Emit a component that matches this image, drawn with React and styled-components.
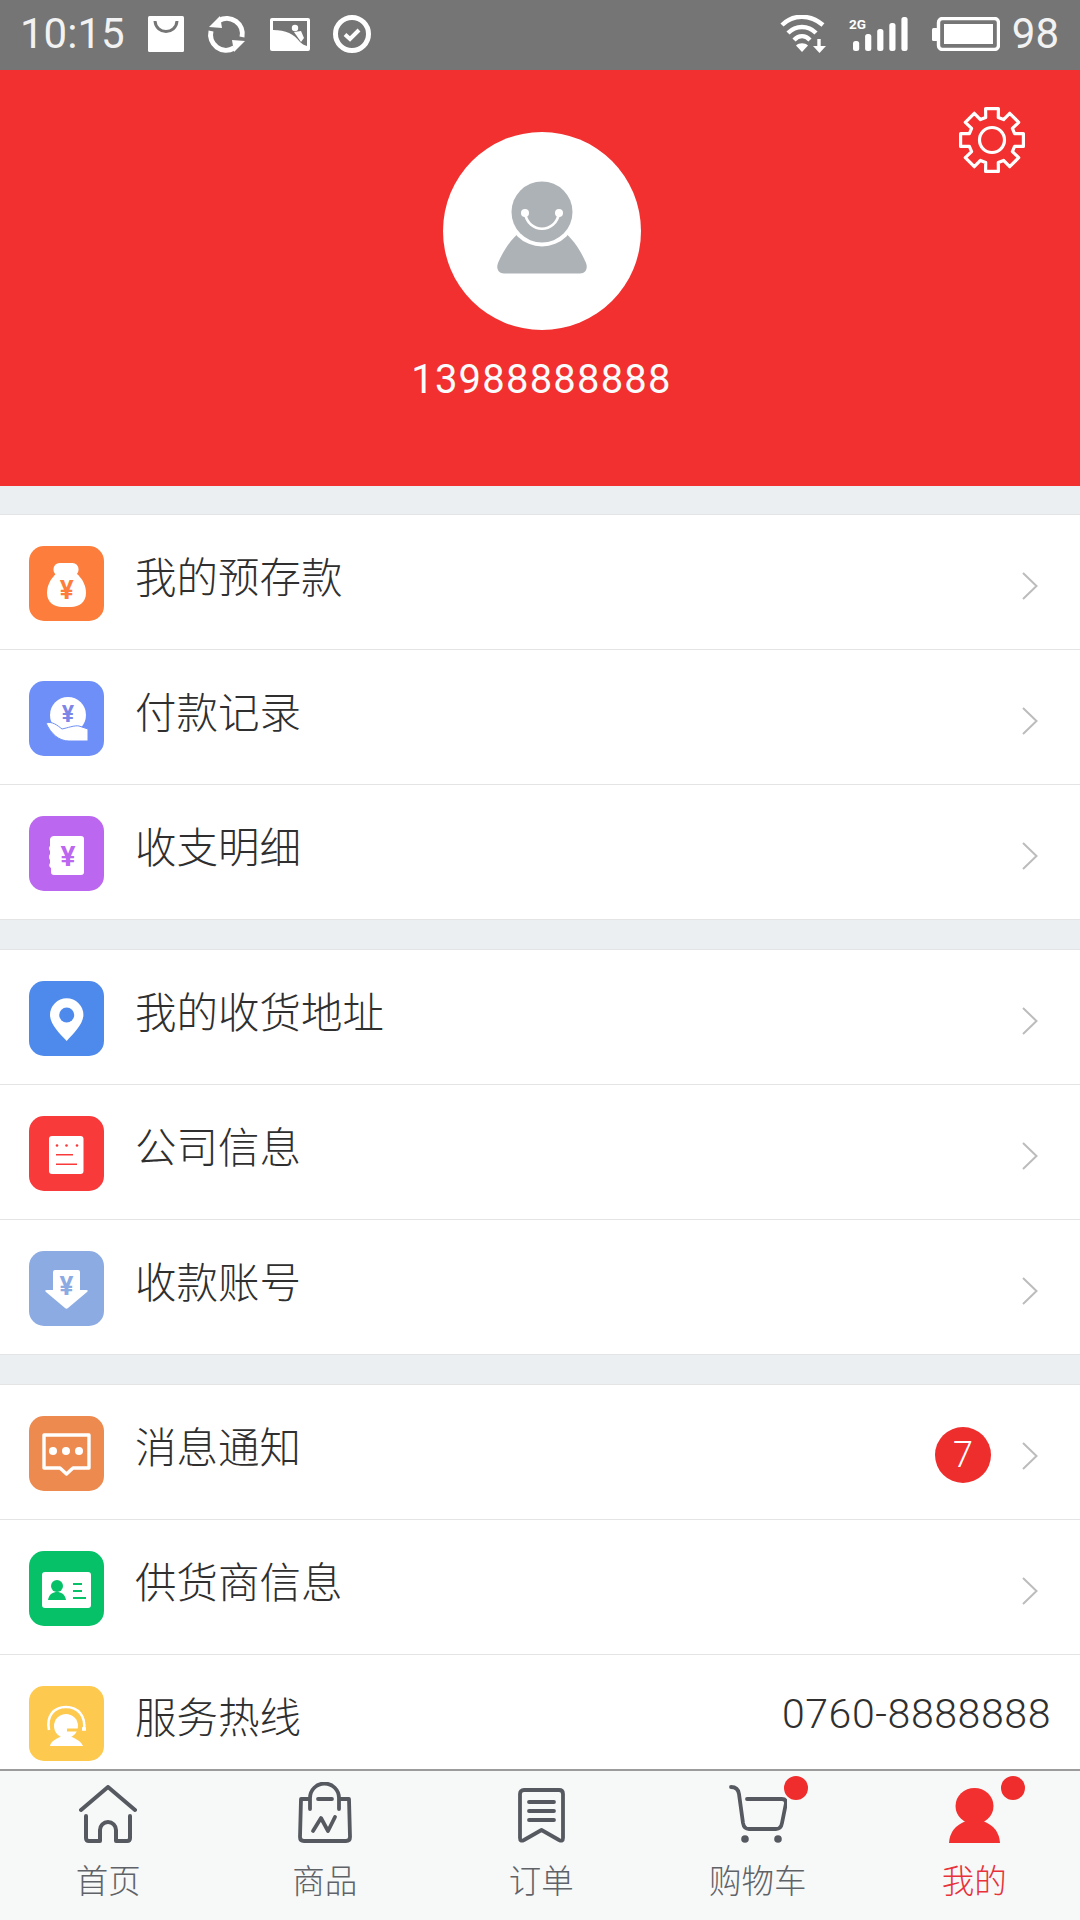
import React from "react";
import styled, { createGlobalStyle } from "styled-components";

const Global = createGlobalStyle`
  html, body { margin: 0; padding: 0; background: #ebeff1; }
  * { box-sizing: border-box; }
  #root { width: 1080px; height: 1920px; overflow: hidden; }
`;

const CJK = `Roboto, "Noto Sans CJK SC", sans-serif`;

const Page = styled.div`
  width: 1080px;
  height: 1920px;
  display: flex;
  flex-direction: column;
  overflow: hidden;
  font-family: ${CJK};
  background: #ebeff1;
`;

const StatusBar = styled.div`
  flex: none;
  height: 70px;
  background: #757575;
  display: flex;
  align-items: center;
  justify-content: space-between;
  padding: 0 21px 2px 20px;
  color: #fff;
`;
const StatusGroup = styled.div`
  display: flex;
  align-items: center;
  gap: ${(p) => p.$gap}px;
`;
const StatusText = styled.span`
  font-size: 42px;
  line-height: 50px;
  font-weight: 400;
  margin-right: ${(p) => p.$after || 0}px;
  margin-left: ${(p) => p.$before || 0}px;
  color: #f2f2f2;
`;

const Header = styled.header`
  flex: none;
  position: relative;
  height: 416px;
  background: #f1302f;
  display: flex;
  flex-direction: column;
  align-items: center;
  padding: 62px 0 0 3px;
`;
const GearButton = styled.div`
  position: absolute;
  top: 35px;
  right: 53px;
  line-height: 0;
`;
const Avatar = styled.div`
  width: 198px;
  height: 198px;
  border-radius: 50%;
  background: #fff;
  display: flex;
  align-items: center;
  justify-content: center;
  padding-bottom: 9px;
`;
const Phone = styled.div`
  margin-top: 25px;
  font-size: 40px;
  line-height: 50px;
  letter-spacing: 1.2px;
  font-weight: 400;
  color: #fbfbfb;
`;

const List = styled.main`
  flex: 1;
  min-height: 0;
  overflow: hidden;
  padding-top: 29px;
  display: flex;
  flex-direction: column;
  gap: 30px;
`;
const Section = styled.section`
  flex: none;
  background: #fff;
  box-shadow: 0 -1px 0 #e2e4e5;
`;
const Row = styled.div`
  height: 135px;
  display: flex;
  align-items: center;
  padding: 0 42px 0 29px;
  border-bottom: 1px solid #e2e4e5;
`;
const Tile = styled.div`
  flex: none;
  width: 75px;
  height: 75px;
  border-radius: 15px;
  background: ${(p) => p.$bg};
  line-height: 0;
  margin-top: 3px;
`;
const Label = styled.div`
  flex: 1;
  margin: 0 0 6px 31px;
  font-size: 41.500px;
  line-height: 56px;
  color: #2f2f2f;
  font-weight: 300;
`;
const Badge = styled.div`
  width: 56px;
  height: 56px;
  border-radius: 50%;
  background: #ee2d2d;
  color: #fff;
  font-size: 36px;
  font-weight: 300;
  line-height: 56px;
  text-align: center;
  margin: 6px 31px 0 0;
`;
const Chevron = styled.svg`
  flex: none;
  width: 16px;
  height: 28px;
  margin-top: 7px;
`;
const Hotline = styled.div`
  font-size: 41px;
  line-height: 50px;
  letter-spacing: 0.6px;
  color: #2f2f2f;
  margin: 0 -13px 16px 0;
  font-weight: 300;
`;

const TabBar = styled.nav`
  flex: none;
  height: 151px;
  border-top: 2px solid #9c9c9c;
  background: #f7f8f8;
  display: grid;
  grid-template-columns: repeat(5, 216.5px);
`;
const Tab = styled.div`
  display: flex;
  flex-direction: column;
  align-items: center;
  padding-top: 14px;
`;
const TabIcon = styled.div`
  position: relative;
  height: 58px;
  display: flex;
  align-items: flex-end;
`;
const Dot = styled.span`
  position: absolute;
  top: -9px;
  left: ${(p) => p.$left}px;
  width: 24px;
  height: 24px;
  border-radius: 50%;
  background: #f02d2d;
`;
const TabLabel = styled.div`
  margin-top: 17px;
  font-size: 32.500px;
  line-height: 44px;
  font-weight: 300;
  color: ${(p) => (p.$active ? "#e8323a" : "#5f6368")};
`;

const W = "#fff";
const G = "#757575";

const Yen = ({ x, y, size, color }) => (
  <text x={x} y={y} fontSize={size} fontWeight="700" fill={color} textAnchor="middle" fontFamily="Roboto, sans-serif">¥</text>
);

const gearPath = () => {
  const cx = 35, cy = 35, n = 8, ro = 32, ri = 23.5;
  const pts = [];
  for (let i = 0; i < n; i++) {
    const a = (-90 + (i * 360) / n) * (Math.PI / 180);
    const d = 0.2, e = 0.27;
    pts.push([cx + ri * Math.cos(a - e), cy + ri * Math.sin(a - e)]);
    pts.push([cx + ro * Math.cos(a - d), cy + ro * Math.sin(a - d)]);
    pts.push([cx + ro * Math.cos(a + d), cy + ro * Math.sin(a + d)]);
    pts.push([cx + ri * Math.cos(a + e), cy + ri * Math.sin(a + e)]);
  }
  return "M" + pts.map((p) => p.map((v) => v.toFixed(1)).join(" ")).join("L") + "Z";
};

const Gear = () => (
  <svg width="70" height="70" viewBox="0 0 70 70" fill="none" stroke={W} strokeWidth="3.200" strokeLinejoin="round">
    <path d={gearPath()} />
    <circle cx="35" cy="35" r="12.500" />
  </svg>
);

const AvatarGlyph = () => (
  <svg width="90" height="96" viewBox="0 0 90 96">
    <path fill="#adb2b7" d="M7 94.500C1 94.500-1 89 1 84 6 72 14 60 24 52L66 52C76 60 84 72 89 84 91 89 89 94.500 83 94.500Z" />
    <circle cx="45" cy="33" r="34.500" fill={W} />
    <circle cx="45" cy="33" r="30.500" fill="#adb2b7" />
    <path d="M28 34C31 55 59 55 62 34" fill="none" stroke={W} strokeWidth="2.600" />
    <circle cx="28" cy="34" r="4" fill={W} />
    <circle cx="62" cy="34" r="4" fill={W} />
  </svg>
);

const BagStatus = () => (
  <svg width="36" height="36" viewBox="0 0 36 36">
    <rect width="36" height="36" rx="1.500" fill={W} />
    <path d="M7 5C8 19 28 19 29 5" fill="none" stroke={G} strokeWidth="3" />
  </svg>
);
const SyncStatus = () => (
  <svg width="40" height="38" viewBox="0 0 40 38" fill="none">
    <path d="M12 5.500A15.500 15.500 0 0 1 35 22" stroke={W} strokeWidth="5" />
    <path d="M27 33A15.500 15.500 0 0 1 4 16" stroke={W} strokeWidth="5" />
    <path d="M2 12L13 1 15 13Z" fill={W} />
    <path d="M38 26L27 37 25 25Z" fill={W} />
  </svg>
);
const ImageStatus = () => (
  <svg width="40" height="33" viewBox="0 0 40 33">
    <rect width="40" height="33" rx="2" fill={W} />
    <path d="M3 3H37V28C34 27 32 26 30 24 24 16 16 12 3 12Z" fill={G} />
    <circle cx="25" cy="10" r="3.200" fill={W} />
    <path d="M24 14L31 24 34 20 31 13Z" fill={W} />
  </svg>
);
const CheckStatus = () => (
  <svg width="38" height="38" viewBox="0 0 38 38" fill="none" stroke={W}>
    <circle cx="19" cy="19" r="16.500" strokeWidth="5" />
    <path d="M12 19.500L17 24 26 15" strokeWidth="4" />
  </svg>
);
const WifiStatus = () => (
  <svg width="46" height="38" viewBox="0 0 46 38" fill="none" stroke={W}>
    <path d="M2 10C13-1 30-1 43 10" strokeWidth="4.400" />
    <path d="M8 18C16 10 28 10 36 18" strokeWidth="4.400" />
    <path d="M14 25C19 20 25 20 30 25" strokeWidth="4.400" />
    <path d="M16 30.500C19 27.500 25 27.500 28 30.500L22 37Z" fill={W} stroke="none" />
    <path d="M39 24V34" strokeWidth="3.400" />
    <path d="M33 31H46L39.500 38Z" fill={W} stroke="none" />
  </svg>
);
const SignalStatus = () => (
  <svg width="62" height="36" viewBox="0 0 62 36" fill={W}>
    <text x="1" y="13" fontSize="13" fontWeight="700" fontFamily="Roboto, sans-serif" textLength="17" lengthAdjust="spacingAndGlyphs">2G</text>
    {[25, 18, 13, 7, 1].map((t, i) => (
      <rect key={i} x={5 + i * 12.100} y={t} width="6.200" height={35 - t} rx="2.500" />
    ))}
  </svg>
);
const BatteryStatus = () => (
  <svg width="68" height="34" viewBox="0 0 68 34">
    <rect x="0" y="11" width="6" height="13" rx="1.500" fill={W} />
    <rect x="6.500" y="1.500" width="60" height="31" rx="4" fill="none" stroke={W} strokeWidth="3.400" />
    <rect x="12" y="7" width="49" height="20" fill={W} />
  </svg>
);

const Tile75 = ({ children }) => <svg width="75" height="75" viewBox="0 0 75 75">{children}</svg>;

const MoneyBag = () => (
  <Tile75>
    <rect x="24.500" y="17" width="25" height="13" rx="6" fill={W} />
    <path fill={W} d="M28 27C21 33 18 40 18 47 18 56 25 61 33 61H42C50 61 57 56 57 47 57 40 54 33 47 27Z" />
    <Yen x="37.700" y="53" size="26" color="#fd7e3c" />
  </Tile75>
);
const HandCoin = () => (
  <Tile75>
    <circle cx="39" cy="34" r="18" fill={W} />
    <Yen x="39" y="41" size="23" color="#7d86e6" />
    <path fill={W} stroke="#6f8ff8" strokeWidth="1" d="M17 42C23 40 28 44 33 48 38 47 46 44 50 45L59 48V60H40C30 60 22 53 17 42Z" />
  </Tile75>
);
const Ledger = () => (
  <Tile75>
    <path fill={W} d="M25 20H52Q55 20 55 23V56Q55 59 52 59H25Q22 59 22 56V52Q19 50 21 47V44Q19 41 21 38V35Q19 32 21 30V23Q22 20 25 20Z" />
    <Yen x="39" y="50" size="28" color="#bc67ef" />
  </Tile75>
);
const Pin = () => (
  <Tile75>
    <path fill={W} d="M37.700 60C31 53 21 43 21 34A16.700 16.700 0 0 1 54.400 34C54.400 43 44 53 37.700 60Z" />
    <circle cx="37.700" cy="34" r="7.500" fill="#4e8aeb" />
  </Tile75>
);
const Note = () => (
  <Tile75>
    <rect x="20" y="20" width="34.500" height="38" rx="3" fill={W} />
    <g fill="#f93a3a">
      <circle cx="28" cy="29.500" r="1.300" /><circle cx="37.500" cy="29.500" r="1.300" /><circle cx="48" cy="29.500" r="1.300" />
      <rect x="27" y="38" width="17" height="1.500" /><rect x="27" y="47.500" width="21" height="1.500" />
    </g>
  </Tile75>
);
const DownYen = () => (
  <Tile75>
    <path fill={W} d="M24 21Q24 19 26 19H49Q51 19 51 21V39H57Q60 39 58 41L39 57Q37.500 58.500 36 57L17 41Q15 39 18 39H24Z" />
    <Yen x="37.500" y="44" size="26" color="#8dabe3" />
  </Tile75>
);
const Message = () => (
  <Tile75>
    <path fill="none" stroke={W} strokeWidth="3.400" strokeLinejoin="round" d="M15 19H60V52H44L37.500 58 31 52H15Z" />
    <g fill={W}><circle cx="24" cy="35" r="4" /><circle cx="37" cy="35" r="4" /><circle cx="50" cy="35" r="4" /></g>
  </Tile75>
);
const IdCard = () => (
  <Tile75>
    <rect x="13" y="21" width="49" height="36" rx="3" fill={W} />
    <g fill="#06c168">
      <circle cx="28" cy="35" r="6" />
      <path d="M19 49C20 43 24 41 28 41S36 43 37 49Z" />
      <rect x="44" y="32" width="9" height="2" /><rect x="44" y="39" width="9" height="2" /><rect x="44" y="46" width="13" height="2" />
    </g>
  </Tile75>
);
const Headset = () => (
  <Tile75>
    <path d="M20 44C17 30 25 21 37 21S57 30 55 44" fill="none" stroke={W} strokeWidth="2.600" />
    <circle cx="37" cy="40" r="12" fill={W} />
    <path d="M38 44H53" stroke="#fdc94e" strokeWidth="3" />
    <path d="M53 43h4" stroke={W} strokeWidth="3.500" />
    <path d="M21 60C22 55 27 53 31 51H43C47 53 52 55 54 60Z" fill={W} />
  </Tile75>
);

const Arrow = () => (
  <Chevron viewBox="0 0 16 28" fill="none" stroke="#bcbcbc" strokeWidth="2">
    <path d="M1 1L14.500 14 1 27" />
  </Chevron>
);

const sections = [
  [
    { label: "我的预存款", bg: "#fd7e3c", Icon: MoneyBag },
    { label: "付款记录", bg: "#6f8ff8", Icon: HandCoin },
    { label: "收支明细", bg: "#bc67ef", Icon: Ledger },
  ],
  [
    { label: "我的收货地址", bg: "#4e8aeb", Icon: Pin },
    { label: "公司信息", bg: "#f93a3a", Icon: Note },
    { label: "收款账号", bg: "#8dabe3", Icon: DownYen },
  ],
  [
    { label: "消息通知", bg: "#ed8a4f", Icon: Message, badge: "7" },
    { label: "供货商信息", bg: "#06c168", Icon: IdCard },
    { label: "服务热线", bg: "#fdc94e", Icon: Headset, value: "0760-8888888" },
  ],
];

const TS = "#565a60";
const HomeIcon = () => (
  <svg width="58" height="58" viewBox="0 0 58 58" fill="none" stroke={TS} strokeWidth="4" strokeLinecap="round" strokeLinejoin="round">
    <path d="M2 25L29 2 56 25" />
    <path d="M7 31V53Q7 56 10 56H21V45A8 8 0 0 1 37 45V56H48Q51 56 51 53V31" />
  </svg>
);
const BagIcon = () => (
  <svg width="54" height="61" viewBox="0 0 54 61" fill="none" stroke={TS} strokeWidth="3.800" strokeLinecap="round" strokeLinejoin="round">
    <path d="M11 17H3L2 55Q2 59 6 59H48Q52 59 52 55L51 17H42" />
    <path d="M12 27V16A14.500 14.500 0 0 1 41 16V27" />
    <path d="M20 17H34" />
    <path d="M15 49L23 36 30 49 37 35" />
  </svg>
);
const OrderIcon = () => (
  <svg width="47" height="55" viewBox="0 0 47 55" fill="none" stroke={TS} strokeWidth="3.800" strokeLinecap="round" strokeLinejoin="round">
    <path d="M6 2H41Q45 2 45 6V50Q45 54 41 52L23.500 42 6 52Q2 54 2 50V6Q2 2 6 2Z" />
    <path d="M11 14H36M11 23H36M11 32H36" />
  </svg>
);
const CartIcon = () => (
  <svg width="58" height="58" viewBox="0 0 58 58" fill="none" stroke={TS} strokeWidth="3.800" strokeLinecap="round" strokeLinejoin="round">
    <path d="M2 2Q9 2 10 9L14 38Q15 44 20 44H47Q52 44 53 38L57 18Q57 14 53 14H18" />
    <circle cx="16" cy="54" r="3.800" fill={TS} stroke="none" />
    <circle cx="49" cy="54" r="3.800" fill={TS} stroke="none" />
  </svg>
);
const MeIcon = () => (
  <svg width="51" height="55" viewBox="0 0 51 55" fill="#f1302f">
    <ellipse cx="25.500" cy="18" rx="19" ry="18" />
    <path d="M0 55Q1 39 17 33H34Q50 39 51 55Z" />
  </svg>
);

const tabs = [
  { label: "首页", Icon: HomeIcon },
  { label: "商品", Icon: BagIcon },
  { label: "订单", Icon: OrderIcon },
  { label: "购物车", Icon: CartIcon, dot: 55 },
  { label: "我的", Icon: MeIcon, dot: 52, active: true },
];

export default function App() {
  return (
    <Page>
      <Global />
      <StatusBar>
        <StatusGroup $gap={23}>
          <StatusText>10:15</StatusText>
          <BagStatus />
          <SyncStatus />
          <ImageStatus />
          <CheckStatus />
        </StatusGroup>
        <StatusGroup $gap={22}>
          <WifiStatus />
          <SignalStatus />
          <BatteryStatus />
          <StatusText $before={-10}>98</StatusText>
        </StatusGroup>
      </StatusBar>
      <Header>
        <GearButton><Gear /></GearButton>
        <Avatar><AvatarGlyph /></Avatar>
        <Phone>13988888888</Phone>
      </Header>
      <List>
        {sections.map((rows, i) => (
          <Section key={i}>
            {rows.map(({ label, bg, Icon, badge, value }) => (
              <Row key={label}>
                <Tile $bg={bg}><Icon /></Tile>
                <Label>{label}</Label>
                {badge && <Badge>{badge}</Badge>}
                {value ? <Hotline>{value}</Hotline> : <Arrow />}
              </Row>
            ))}
          </Section>
        ))}
      </List>
      <TabBar>
        {tabs.map(({ label, Icon, dot, active }) => (
          <Tab key={label}>
            <TabIcon>
              <Icon />
              {dot && <Dot $left={dot} />}
            </TabIcon>
            <TabLabel $active={active}>{label}</TabLabel>
          </Tab>
        ))}
      </TabBar>
    </Page>
  );
}
